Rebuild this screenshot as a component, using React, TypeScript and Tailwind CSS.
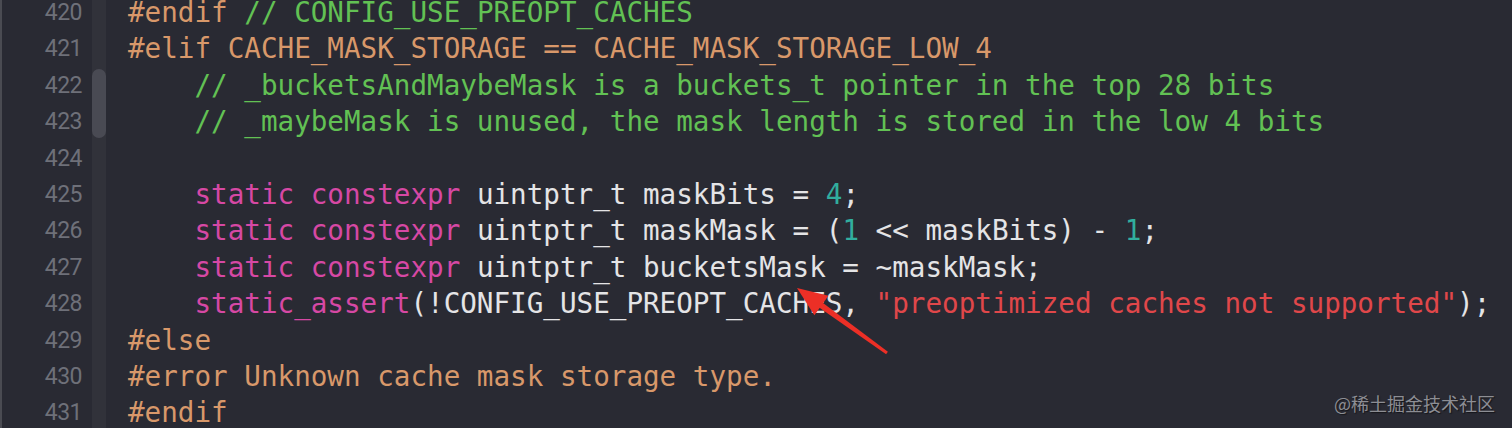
type Tok = [string, string];

const C = {
  pre: "text-[#d8986a]",
  com: "text-[#62c154]",
  kw: "text-[#d648a4]",
  num: "text-[#31ae9e]",
  str: "text-[#e0474a]",
  txt: "text-[#e4e4e6]",
};

const lines: { n: number; toks: Tok[] }[] = [
  { n: 420, toks: [["#endif ", C.pre], ["// CONFIG_USE_PREOPT_CACHES", C.com]] },
  { n: 421, toks: [["#elif CACHE_MASK_STORAGE == CACHE_MASK_STORAGE_LOW_4", C.pre]] },
  { n: 422, toks: [["    // _bucketsAndMaybeMask is a buckets_t pointer in the top 28 bits", C.com]] },
  { n: 423, toks: [["    // _maybeMask is unused, the mask length is stored in the low 4 bits", C.com]] },
  { n: 424, toks: [] },
  {
    n: 425,
    toks: [
      ["    static constexpr", C.kw],
      [" uintptr_t maskBits = ", C.txt],
      ["4", C.num],
      [";", C.txt],
    ],
  },
  {
    n: 426,
    toks: [
      ["    static constexpr", C.kw],
      [" uintptr_t maskMask = (", C.txt],
      ["1", C.num],
      [" << maskBits) - ", C.txt],
      ["1", C.num],
      [";", C.txt],
    ],
  },
  {
    n: 427,
    toks: [
      ["    static constexpr", C.kw],
      [" uintptr_t bucketsMask = ~maskMask;", C.txt],
    ],
  },
  {
    n: 428,
    toks: [
      ["    static_assert", C.kw],
      ["(!CONFIG_USE_PREOPT_CACHES, ", C.txt],
      ['"preoptimized caches not supported"', C.str],
      [");", C.txt],
    ],
  },
  { n: 429, toks: [["#else", C.pre]] },
  { n: 430, toks: [["#error Unknown cache mask storage type.", C.pre]] },
  { n: 431, toks: [["#endif", C.pre]] },
];

function Arrow() {
  return (
    <svg className="absolute left-0 top-0 pointer-events-none" width="1512" height="428" viewBox="0 0 1512 428">
      <polygon points="816.3,305.4 819.7,300.6 887.9,351.8 886.1,354.2" fill="#ec2f26" />
      <polygon points="797,288 828.4,295.7 814.4,315.3" fill="#ec2f26" />
    </svg>
  );
}

export default function App() {
  return (
    <div className="relative w-[1512px] h-[428px] overflow-hidden bg-[#292a33] flex">
      <div className="w-[2px] bg-[#4a4b52]" />
      <div className="w-[80px] flex flex-col items-end mt-[-5px] font-['Roboto',sans-serif] text-[23px] text-[#6e7079]">
        {lines.map((l) => (
          <div key={l.n} className="shrink-0 h-[36.4px] leading-[36.4px] tracking-[-0.5px]">
            {l.n}
          </div>
        ))}
      </div>
      <div className="ml-[10px] w-[14px] bg-[#31323a] relative">
        <div className="absolute left-0 top-[69px] w-[14px] h-[69px] rounded-full bg-[#494a53]" />
      </div>
      <div className="ml-[22px] mt-[-5px] flex flex-col font-['DejaVu_Sans_Mono',monospace] text-[27.6px] whitespace-pre">
        {lines.map((l) => (
          <div key={l.n} className="shrink-0 h-[36.4px] leading-[36.4px]">
            {l.toks.map(([t, c], i) => (
              <span key={i} className={c}>
                {t}
              </span>
            ))}
          </div>
        ))}
      </div>
      <Arrow />
      <div className="absolute right-[17px] bottom-[11px] font-['Noto_Sans_CJK_SC',sans-serif] text-[18px] text-[#8d8e94] [text-shadow:1px_1px_1px_rgba(0,0,0,0.5)]">
        @稀土掘金技术社区
      </div>
    </div>
  );
}
